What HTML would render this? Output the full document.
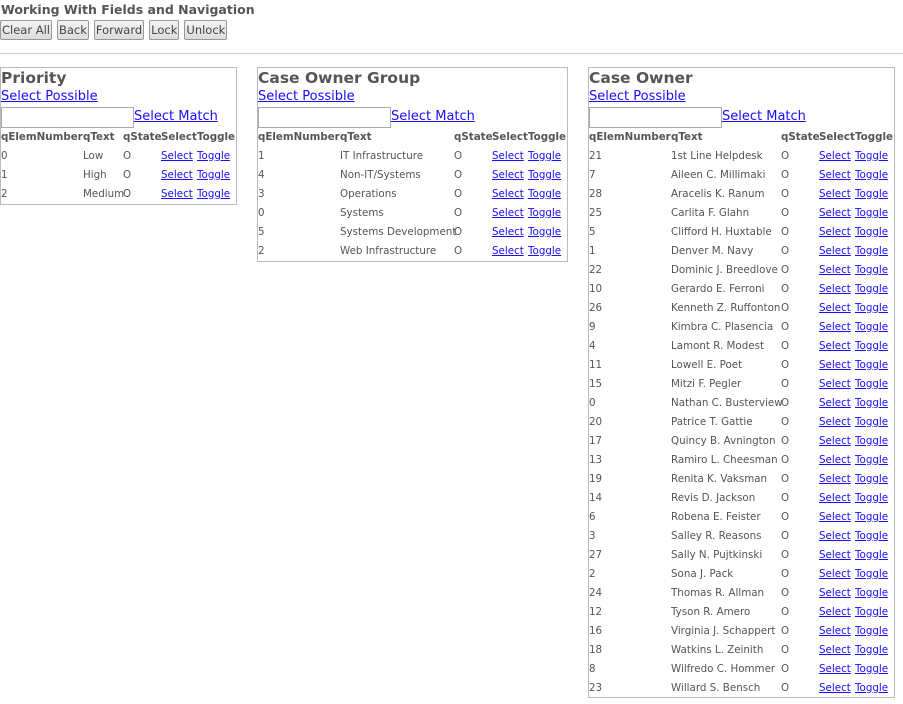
<!DOCTYPE html>
<html><head><meta charset="utf-8"><style>
*{margin:0;padding:0;box-sizing:border-box}
body{width:903px;height:704px;background:#fff;color:#555;font-family:"DejaVu Sans","Liberation Sans",sans-serif;position:relative;overflow:hidden}
h1{position:absolute;left:1px;top:2px;font-size:12.5px;font-weight:bold;color:#555}
.btns{position:absolute;left:0;top:20px;display:flex;gap:5px}
.btns span{display:inline-block;height:20px;line-height:18px;padding:0 1px;border:1px solid #999;border-radius:2px;background:linear-gradient(#f4f4f4,#dcdcdc);font-size:11.5px;color:#444}
.hr{position:absolute;left:0;top:53px;width:903px;border-top:1px solid #ccc}
.box{position:absolute;top:67px;border:1px solid #bbb}
.box h2{position:absolute;left:0;top:1px;font-size:15.5px;font-weight:bold;color:#555;white-space:nowrap}
.sp{position:absolute;left:0;top:21px;font-size:13px;color:#1a0dff;text-decoration:underline;white-space:nowrap}
.inp{position:absolute;left:0;top:39px;width:133px;height:21px;border:1px solid #aaa}
.sm{position:absolute;left:133px;top:41px;font-size:13px;color:#1a0dff;text-decoration:underline;white-space:nowrap}
table{position:absolute;left:0;top:59px;border-collapse:collapse;table-layout:fixed}
td,th{height:19px;padding:0;font-size:10.3px;white-space:nowrap;text-align:left;overflow:visible;vertical-align:middle}
th{font-size:10.3px;font-weight:bold}
a{color:#1a0dff;text-decoration:underline}
</style></head><body>
<h1>Working With Fields and Navigation</h1>
<div class="btns"><span>Clear All</span><span>Back</span><span>Forward</span><span>Lock</span><span>Unlock</span></div>
<div class="hr"></div>

<div class="box" style="left:0;width:237px;height:138px">
<h2>Priority</h2><div class="sp">Select Possible</div><div class="inp"></div><div class="sm">Select Match</div>
<table style="width:236px"><colgroup><col style="width:82px"><col style="width:40px"><col style="width:38px"><col style="width:36px"><col style="width:40px"></colgroup>
<tr><th>qElemNumber</th><th>qText</th><th>qState</th><th>Select</th><th>Toggle</th></tr>
<tr><td>0</td><td>Low</td><td>O</td><td><a>Select</a></td><td><a>Toggle</a></td></tr>
<tr><td>1</td><td>High</td><td>O</td><td><a>Select</a></td><td><a>Toggle</a></td></tr>
<tr><td>2</td><td>Medium</td><td>O</td><td><a>Select</a></td><td><a>Toggle</a></td></tr>
</table></div>

<div class="box" style="left:257px;width:311px;height:195px">
<h2>Case Owner Group</h2><div class="sp">Select Possible</div><div class="inp"></div><div class="sm">Select Match</div>
<table style="width:310px"><colgroup><col style="width:82px"><col style="width:114px"><col style="width:38px"><col style="width:36px"><col style="width:40px"></colgroup>
<tr><th>qElemNumber</th><th>qText</th><th>qState</th><th>Select</th><th>Toggle</th></tr>
<tr><td>1</td><td>IT Infrastructure</td><td>O</td><td><a>Select</a></td><td><a>Toggle</a></td></tr>
<tr><td>4</td><td>Non-IT/Systems</td><td>O</td><td><a>Select</a></td><td><a>Toggle</a></td></tr>
<tr><td>3</td><td>Operations</td><td>O</td><td><a>Select</a></td><td><a>Toggle</a></td></tr>
<tr><td>0</td><td>Systems</td><td>O</td><td><a>Select</a></td><td><a>Toggle</a></td></tr>
<tr><td>5</td><td>Systems Development</td><td>O</td><td><a>Select</a></td><td><a>Toggle</a></td></tr>
<tr><td>2</td><td>Web Infrastructure</td><td>O</td><td><a>Select</a></td><td><a>Toggle</a></td></tr>
</table></div>

<div class="box" style="left:588px;width:307px;height:631px">
<h2>Case Owner</h2><div class="sp">Select Possible</div><div class="inp"></div><div class="sm">Select Match</div>
<table style="width:306px"><colgroup><col style="width:82px"><col style="width:110px"><col style="width:38px"><col style="width:36px"><col style="width:40px"></colgroup>
<tr><th>qElemNumber</th><th>qText</th><th>qState</th><th>Select</th><th>Toggle</th></tr>
<tr><td>21</td><td>1st Line Helpdesk</td><td>O</td><td><a>Select</a></td><td><a>Toggle</a></td></tr>
<tr><td>7</td><td>Aileen C. Millimaki</td><td>O</td><td><a>Select</a></td><td><a>Toggle</a></td></tr>
<tr><td>28</td><td>Aracelis K. Ranum</td><td>O</td><td><a>Select</a></td><td><a>Toggle</a></td></tr>
<tr><td>25</td><td>Carlita F. Glahn</td><td>O</td><td><a>Select</a></td><td><a>Toggle</a></td></tr>
<tr><td>5</td><td>Clifford H. Huxtable</td><td>O</td><td><a>Select</a></td><td><a>Toggle</a></td></tr>
<tr><td>1</td><td>Denver M. Navy</td><td>O</td><td><a>Select</a></td><td><a>Toggle</a></td></tr>
<tr><td>22</td><td>Dominic J. Breedlove</td><td>O</td><td><a>Select</a></td><td><a>Toggle</a></td></tr>
<tr><td>10</td><td>Gerardo E. Ferroni</td><td>O</td><td><a>Select</a></td><td><a>Toggle</a></td></tr>
<tr><td>26</td><td>Kenneth Z. Ruffonton</td><td>O</td><td><a>Select</a></td><td><a>Toggle</a></td></tr>
<tr><td>9</td><td>Kimbra C. Plasencia</td><td>O</td><td><a>Select</a></td><td><a>Toggle</a></td></tr>
<tr><td>4</td><td>Lamont R. Modest</td><td>O</td><td><a>Select</a></td><td><a>Toggle</a></td></tr>
<tr><td>11</td><td>Lowell E. Poet</td><td>O</td><td><a>Select</a></td><td><a>Toggle</a></td></tr>
<tr><td>15</td><td>Mitzi F. Pegler</td><td>O</td><td><a>Select</a></td><td><a>Toggle</a></td></tr>
<tr><td>0</td><td>Nathan C. Busterview</td><td>O</td><td><a>Select</a></td><td><a>Toggle</a></td></tr>
<tr><td>20</td><td>Patrice T. Gattie</td><td>O</td><td><a>Select</a></td><td><a>Toggle</a></td></tr>
<tr><td>17</td><td>Quincy B. Avnington</td><td>O</td><td><a>Select</a></td><td><a>Toggle</a></td></tr>
<tr><td>13</td><td>Ramiro L. Cheesman</td><td>O</td><td><a>Select</a></td><td><a>Toggle</a></td></tr>
<tr><td>19</td><td>Renita K. Vaksman</td><td>O</td><td><a>Select</a></td><td><a>Toggle</a></td></tr>
<tr><td>14</td><td>Revis D. Jackson</td><td>O</td><td><a>Select</a></td><td><a>Toggle</a></td></tr>
<tr><td>6</td><td>Robena E. Feister</td><td>O</td><td><a>Select</a></td><td><a>Toggle</a></td></tr>
<tr><td>3</td><td>Salley R. Reasons</td><td>O</td><td><a>Select</a></td><td><a>Toggle</a></td></tr>
<tr><td>27</td><td>Sally N. Pujtkinski</td><td>O</td><td><a>Select</a></td><td><a>Toggle</a></td></tr>
<tr><td>2</td><td>Sona J. Pack</td><td>O</td><td><a>Select</a></td><td><a>Toggle</a></td></tr>
<tr><td>24</td><td>Thomas R. Allman</td><td>O</td><td><a>Select</a></td><td><a>Toggle</a></td></tr>
<tr><td>12</td><td>Tyson R. Amero</td><td>O</td><td><a>Select</a></td><td><a>Toggle</a></td></tr>
<tr><td>16</td><td>Virginia J. Schappert</td><td>O</td><td><a>Select</a></td><td><a>Toggle</a></td></tr>
<tr><td>18</td><td>Watkins L. Zeinith</td><td>O</td><td><a>Select</a></td><td><a>Toggle</a></td></tr>
<tr><td>8</td><td>Wilfredo C. Hommer</td><td>O</td><td><a>Select</a></td><td><a>Toggle</a></td></tr>
<tr><td>23</td><td>Willard S. Bensch</td><td>O</td><td><a>Select</a></td><td><a>Toggle</a></td></tr>
</table></div>
</body></html>
